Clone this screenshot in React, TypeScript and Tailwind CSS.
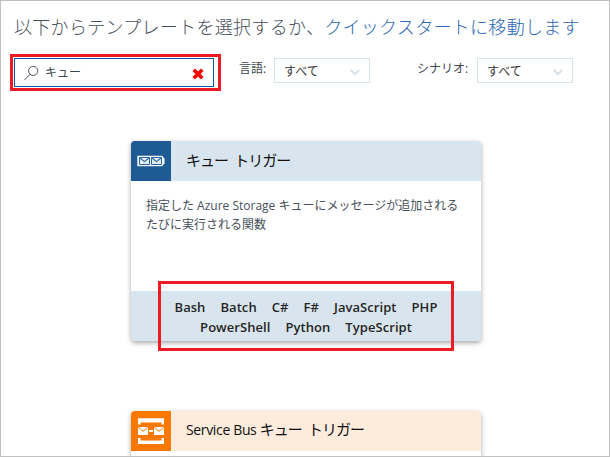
import type { ReactNode } from 'react';

function SearchIcon() {
  return (
    <svg width="16" height="16" viewBox="0 0 16 16" fill="none" stroke="#4c5560" strokeWidth="1">
      <circle cx="9.2" cy="5.9" r="4.6" />
      <path d="M5.9 9.3.5 14.9" />
    </svg>
  );
}

function ClearIcon() {
  return (
    <svg className="relative top-[1px]" width="12" height="12" viewBox="0 0 12 12" stroke="#fb0000" strokeWidth="3.6">
      <path d="M1.7 1.7 10.3 10.3M10.3 1.7 1.7 10.3" />
    </svg>
  );
}

function QueueIcon() {
  return (
    <svg width="40" height="40" viewBox="0 0 40 40" fill="none">
      <path d="M6.3 14.8H31.2L33.6 17.7V22.3L31.2 25.2H6.3Z" fill="#f0f6fa" />
      <path d="M8.5 16.5H18.5V23.5H8.5ZM20.5 16.5H30.5V23.5H20.5Z" fill="#e4eef6" stroke="#2c669c" />
      <path d="M9 17 13.5 20.6 18 17M21 17 25.5 20.6 30 17" stroke="#2c669c" strokeWidth="1.2" />
    </svg>
  );
}

function ServiceBusIcon() {
  return (
    <svg width="40" height="40" viewBox="0 0 40 40" fill="none">
      <path d="M7 13.5V7.2H33V13.5H30.5V11.5H9.5V13.5ZM7 27V33H33V27H30.5V29.5H9.5V27Z" fill="#fff" />
      <path d="M7 16H17V24H7ZM23 16H33V24H23ZM18 19H22V21H18Z" fill="#fff" />
      <path d="M7 16.2 12 20.4 17 16.2M23 16.2 28 20.4 33 16.2" stroke="#fa9a43" strokeWidth="1.1" />
    </svg>
  );
}

function Select({ label, className }: { label: string; className: string }) {
  return (
    <div className={`flex items-start ${className}`}>
      <span className="flex-1 whitespace-nowrap text-[12px] leading-[22px] text-[#3c454e]">{label}</span>
      <div className="flex h-[25px] w-[96px] items-center justify-between border border-[#d6e2ea] pl-[9px] pr-[9px] pt-[3px] text-[12px] leading-[20px] text-[#333]">
        <span>すべて</span>
        <svg width="10" height="7" viewBox="0 0 10 7" fill="none" stroke="#d6e0e7" strokeWidth="2">
          <path d="M.8 1 5 5.2 9.2 1" />
        </svg>
      </div>
    </div>
  );
}

type CardProps = {
  icon: ReactNode;
  title: ReactNode;
  iconColor: string;
  headColor: string;
  children?: ReactNode;
};

function TemplateCard({ icon, title, iconColor, headColor, children }: CardProps) {
  return (
    <section className="flex h-[200px] w-[350px] shrink-0 flex-col overflow-hidden rounded-[4px] bg-white shadow-[0_2px_5px_rgba(0,0,0,0.35)]">
      <header className={`flex h-[40px] shrink-0 items-center ${headColor}`}>
        <div className={`size-[40px] ${iconColor}`}>{icon}</div>
        <h2 className="whitespace-pre pb-[3px] pl-[15px] text-[15px] leading-[20px] tracking-[-1px] text-[#111] [word-spacing:3.4px]">{title}</h2>
      </header>
      {children}
    </section>
  );
}

function Languages({ names }: { names: string[] }) {
  return (
    <div className="flex h-[20px] justify-center gap-[15px]">
      {names.map((name) => (
        <span key={name}>{name}</span>
      ))}
    </div>
  );
}

export default function App() {
  return (
    <main className="relative flex h-[457px] w-[610px] flex-col overflow-hidden border border-[#c0c0c0] bg-white font-['Open_Sans','Noto_Sans_CJK_JP',sans-serif]">
      <h1 className="mt-[12px] h-[28px] whitespace-nowrap pl-[13px] text-[18px] font-light leading-[28px] tracking-[0.3px] text-[#454e58]">
        以下からテンプレートを選択するか、<a className="text-[#2b67b5]">クイックスタートに移動します</a>
      </h1>
      <div className="mt-[17px] flex pl-[13px]">
        <div className="flex h-[29px] w-[200px] items-center border border-[#0d57a2] pl-[9px] pr-[9px] text-[12px] text-[#3c454e]">
          <SearchIcon />
          <span className="flex-1 pl-[5px] pt-[1px]">キュー</span>
          <ClearIcon />
        </div>
        <Select label="言語:" className="ml-[25px] w-[131px]" />
        <Select label="シナリオ:" className="ml-[47px] w-[156px]" />
      </div>
      <div className="mt-[54px] flex flex-col gap-[70px] pl-[130px]">
        <TemplateCard icon={<QueueIcon />} title="キュー トリガー" iconColor="bg-[#1e5a93]" headColor="bg-[#d9e5ee]">
          <p className="flex-1 pl-[15px] pt-[15px] text-[12px] leading-[19px] text-[#464f59]">
            指定した Azure Storage キューにメッセージが追加される
            <br />
            たびに実行される関数
          </p>
          <footer className="h-[50px] bg-[#d9e5ee] pt-[6px] text-[13px] font-semibold leading-[20px] tracking-[0.06px] text-[#252525]">
            <Languages names={['Bash', 'Batch', 'C#', 'F#', 'JavaScript', 'PHP']} />
            <Languages names={['PowerShell', 'Python', 'TypeScript']} />
          </footer>
        </TemplateCard>
        <TemplateCard
          icon={<ServiceBusIcon />}
          title={
            <>
              <span className="text-[14px] tracking-[-0.35px] [word-spacing:0px]">Service Bus </span>キュー トリガー
            </>
          }
          iconColor="bg-[#f97900]"
          headColor="bg-[#fdebdc]"
        />
      </div>
      <div className="absolute left-[9px] top-[53px] h-[37px] w-[211px] border-[3px] border-[#ed1c24]" />
      <div className="absolute left-[157px] top-[280px] h-[70px] w-[296px] border-[3px] border-[#ed1c24]" />
    </main>
  );
}
